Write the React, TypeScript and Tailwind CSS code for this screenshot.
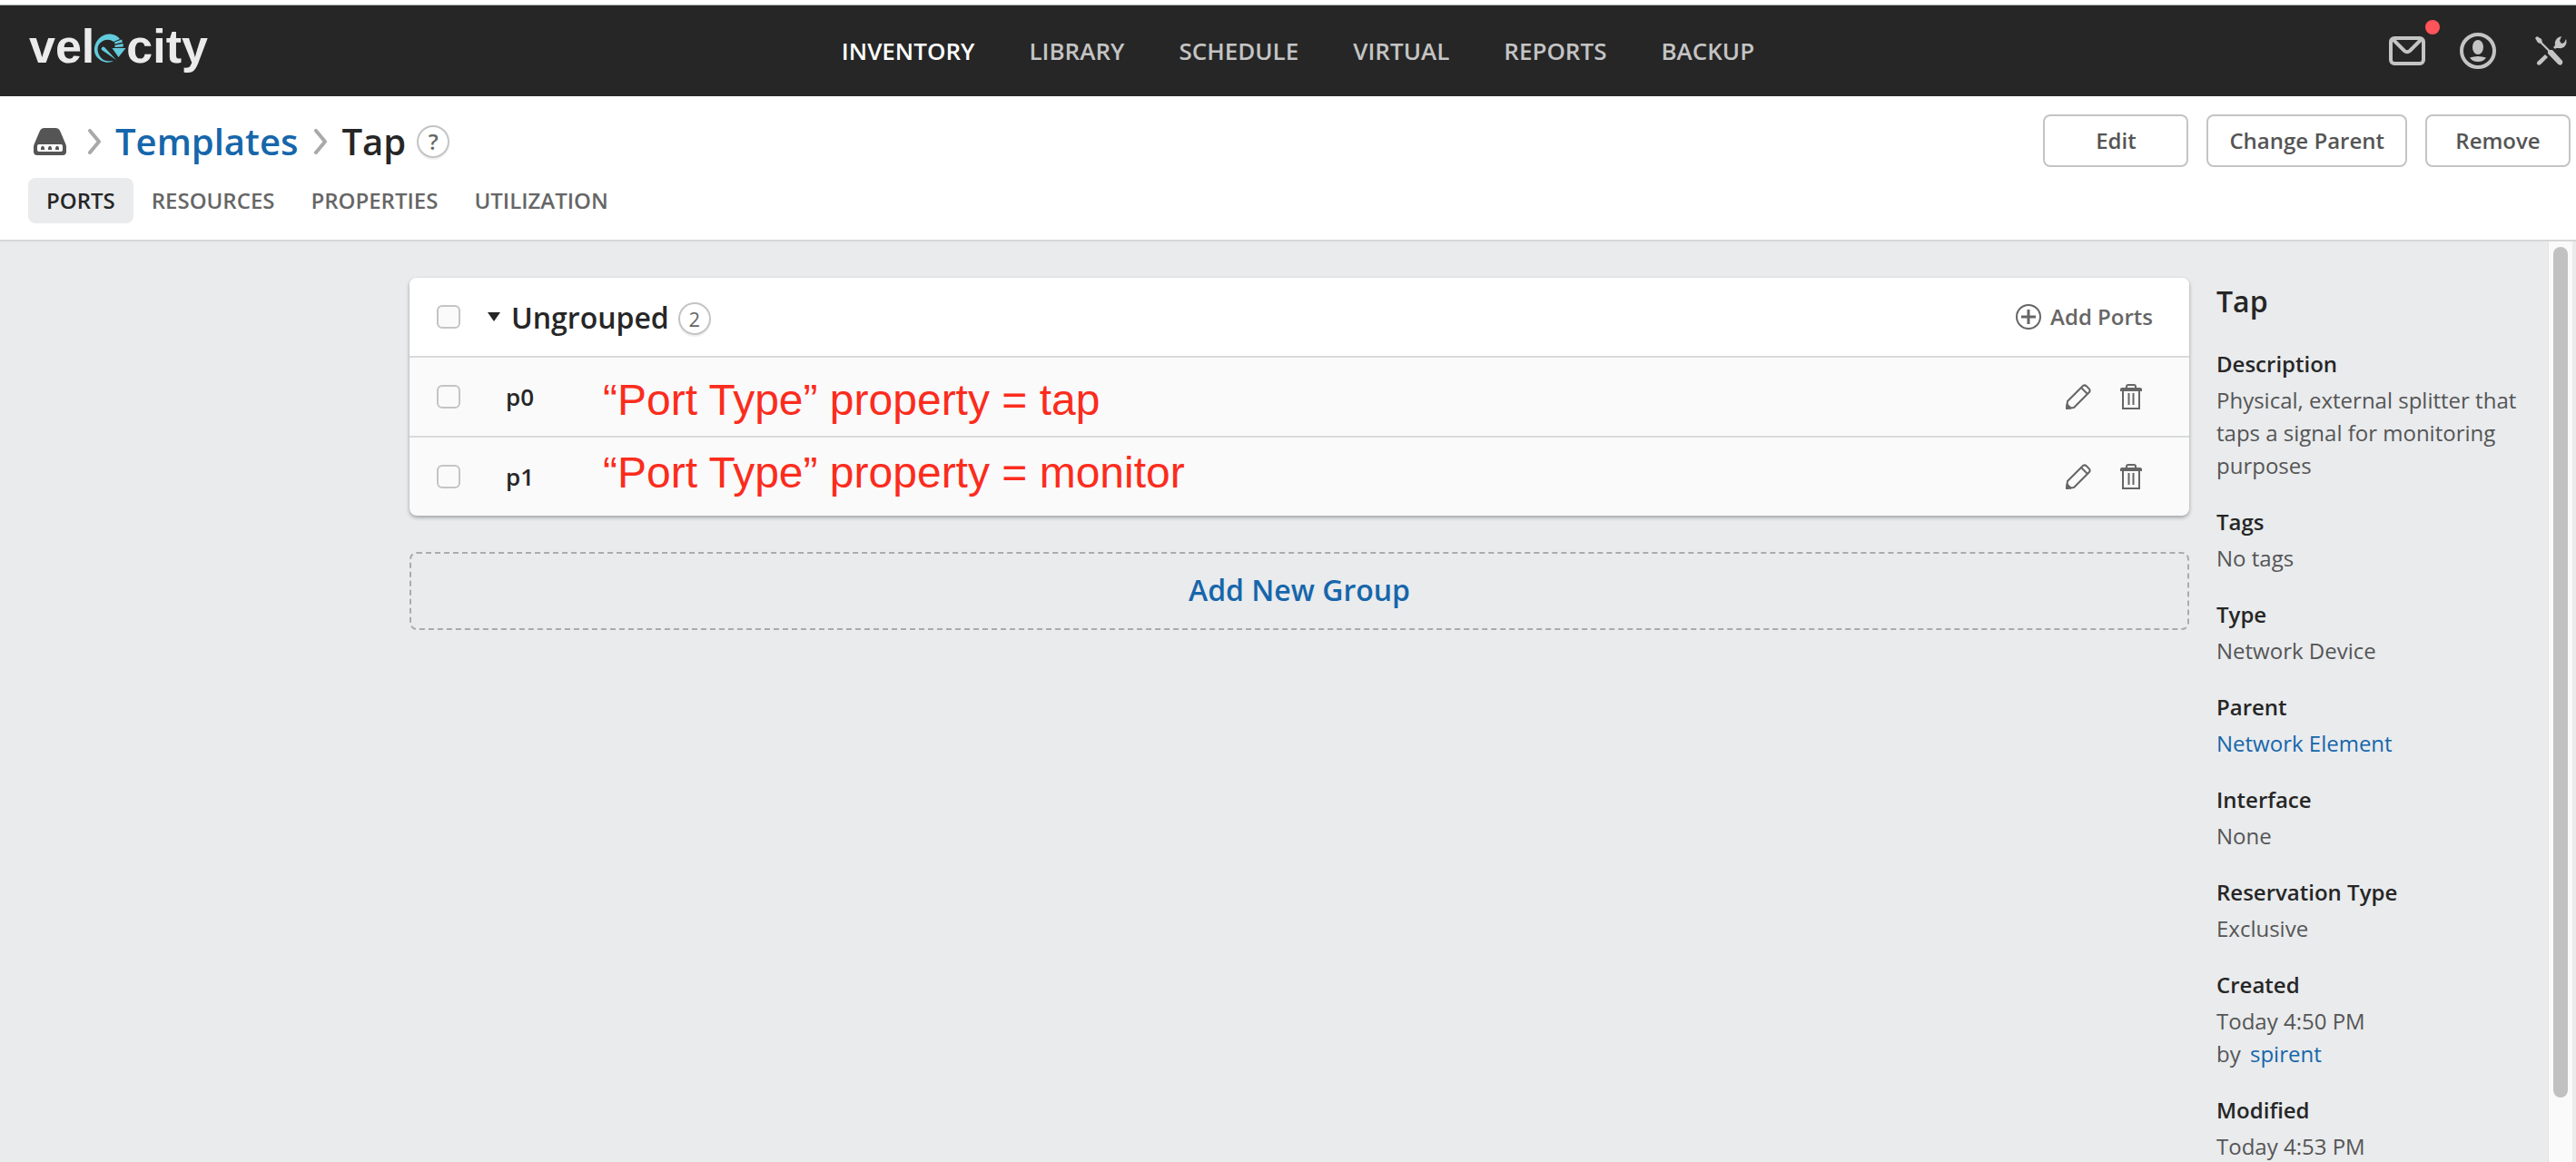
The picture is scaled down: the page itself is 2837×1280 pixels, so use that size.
import React from "react";

const navItems = ["LIBRARY", "SCHEDULE", "VIRTUAL", "REPORTS", "BACKUP"];
const tabs = ["RESOURCES", "PROPERTIES", "UTILIZATION"];
const ports = [
  { name: "p0", note: "“Port Type” property = tap", noteStyle: "pt-2" },
  { name: "p1", note: "“Port Type” property = monitor", noteStyle: "pb-2" },
];

function Logo() {
  return (
    <a href="#home" aria-label="velocity" className="flex items-baseline pb-[10px] font-['Liberation_Sans',sans-serif] text-[52px] leading-[60px] font-bold text-[#ebebeb]">
      <span>vel</span>
      <svg viewBox="0 0 35 32" className="-mb-[2px] h-8 w-[35px]" fill="#62cbdc" aria-hidden="true">
        <path d="M28 6C24 0 13-2 6 4.500C-2 12-2 23 5 28C10 32.500 17 32.500 21 30C15 31 9 30 6 25C2 19 3 12 8 9C12 6 17 6 21 9Z" />
        <path d="M22 9.500L30 6.500l1 3-8.500 2zM22.500 12.700l9-1.700.3 3.500-9.300.5zM19.500 16h15l-8 10z" />
        <path d="M8 18a2 2 0 0 1 3.500-2.500L24 29z" />
      </svg>
      <span>city</span>
    </a>
  );
}

function Chevron() {
  return (
    <svg viewBox="0 0 16 28" className="h-7 w-4" fill="none" stroke="#a9a9a9" strokeWidth="4" aria-hidden="true">
      <path d="M2 2l10 12L2 26" strokeLinecap="round" strokeLinejoin="round" />
    </svg>
  );
}

function Pencil() {
  return (
    <svg viewBox="0 0 28 28" className="size-7" fill="none" stroke="#666" strokeWidth="2" strokeLinejoin="round" aria-hidden="true">
      <path d="M1 27l1-8L19 2q2-1.500 4 .5l2.500 2.500q2 2 .5 4L9 26z" />
      <path d="M17 4l7 7" />
      <path d="M1 27l.5-4.500 4 4z" fill="#666" />
    </svg>
  );
}

function Trash() {
  return (
    <svg viewBox="0 0 24 28" className="h-7 w-6" fill="none" stroke="#666" strokeWidth="2" aria-hidden="true">
      <path d="M3 6v21h18V6M9.500 10v13M14.500 10v13M7 4V3q0-2 2-2h6q2 0 2 2v1" />
      <path d="M0 8V6q0-2 2-2h20q2 0 2 2v2z" fill="#666" stroke="none" />
    </svg>
  );
}

function Check({ label }: { label: string }) {
  return (
    <input
      type="checkbox"
      aria-label={label}
      className="size-[26px] shrink-0 appearance-none rounded-md border-2 border-[#c4c4c4] bg-[#fafafa]"
    />
  );
}

function Item({ label, children }: { label: string; children: React.ReactNode }) {
  return (
    <div className="mb-[26px]">
      <dt className="mb-1 font-semibold text-[#262626]">{label}</dt>
      <dd>{children}</dd>
    </div>
  );
}

export default function App() {
  return (
    <div className="flex h-screen flex-col overflow-hidden bg-white font-['Open_Sans',sans-serif] text-2xl text-[#555]">
      <div className="h-[6px] shrink-0 border-b border-[#a9b5ab] bg-white" />
      <header className="grid h-[100px] shrink-0 grid-cols-[1fr_auto_1fr] items-center bg-[#262626] pr-[10px] pl-8">
        <Logo />
        <nav className="flex gap-[60px] text-[26px] font-semibold text-[#c4c4c4]">
          <a href="#inventory" className="text-white">INVENTORY</a>
          {navItems.map((n) => (
            <a key={n} href={"#" + n.toLowerCase()}>{n}</a>
          ))}
        </nav>
        <div className="flex items-center justify-end gap-[38px]">
          <button aria-label="Messages" className="relative">
            <svg viewBox="0 0 40 32" className="h-8 w-10" fill="none" stroke="#c4c4c4" strokeWidth="4" aria-hidden="true">
              <rect x="2" y="2" width="36" height="28" rx="4" />
              <path d="M4 3l13 13q3 2.500 6 0L36 3" />
            </svg>
            <span className="absolute -top-[18px] -right-4 size-4 rounded-full bg-[#ff5459]" />
          </button>
          <button aria-label="Account">
            <svg viewBox="0 0 40 40" className="size-10" aria-hidden="true">
              <circle cx="20" cy="20" r="18" fill="none" stroke="#c4c4c4" strokeWidth="4" />
              <ellipse cx="20" cy="16" rx="6" ry="8" fill="#c4c4c4" />
              <path d="M11 27.500q9-3 18 0-3 4.500-9 4.500t-9-4.500z" fill="#c4c4c4" />
            </svg>
          </button>
          <button aria-label="Settings" className="ml-1">
            <svg viewBox="0 0 36 32" className="h-8 w-9" aria-hidden="true">
              <path d="M1 2l2-2 5 3 1 4 8 8 3 0 11 12q1 3-1.500 4.500-2 .5-3.500-1L15 19v-3L7 8 4 7z" fill="#c4c4c4" />
              <path d="M12 20l3 3-8 8q-2 1.500-3.500 0T4 27.500z" fill="#c4c4c4" />
              <path d="M21 12l2-2c-1-5 2-9 7-10l-2 5 2 3 3-1 2-4c2 6-2 11-8 10h-3l-1 1z" fill="#c4c4c4" />
            </svg>
          </button>
        </div>
      </header>

      <section className="flex h-40 shrink-0 justify-between border-b-2 border-[#d6d7d8] pt-5 pr-[6px] pl-[31px]">
        <div>
          <div className="flex h-[60px] items-center text-[40px] font-semibold">
            <a href="#inventory" aria-label="Devices" className="ml-[6px]">
              <svg viewBox="0 0 36 30" className="h-[30px] w-9" aria-hidden="true">
                <path d="M12 0h12q4 0 5.500 4L35 17q1 2 1 4v5q0 4-4 4H4q-4 0-4-4v-5q0-2 1-4L6.500 4Q8 0 12 0z" fill="#555" />
                <rect x="4" y="18" width="28" height="8" rx="2" fill="#fff" />
                <path d="M8 24v-2l1-2h2l1 2v2zM16 24v-2l1-2h2l1 2v2zM24 24v-2l1-2h2l1 2v2z" fill="#555" />
              </svg>
            </a>
            <span className="ml-6 flex"><Chevron /></span>
            <a href="#templates" className="ml-[14px] text-[#1666ab]">Templates</a>
            <span className="ml-[18px] flex"><Chevron /></span>
            <h1 className="ml-[14px] text-[#262626]">Tap</h1>
            <button aria-label="Help" className="ml-3 size-9 rounded-full border-2 border-[#c4c4c4] text-2xl leading-8 font-semibold text-[#666] shadow-[0_2px_1px_#0001]">?</button>
          </div>
          <nav className="mt-[10px] flex gap-10 font-semibold text-[#666]">
            <a href="#ports" className="-mr-5 rounded-lg bg-[#e9ebed] px-5 py-[9px] text-[#262626]">PORTS</a>
            {tabs.map((t) => (
              <a key={t} href={"#" + t.toLowerCase()} className="py-[9px]">{t}</a>
            ))}
          </nav>
        </div>
        <div className="flex items-start gap-5 font-semibold">
          {["Edit", "Change Parent", "Remove"].map((b) => (
            <button key={b} className="h-[58px] min-w-40 rounded-lg border-2 border-[#c4c4c4] px-[23px]">{b}</button>
          ))}
        </div>
      </section>

      <div className="flex min-h-0 flex-1 bg-[#e9ebed] pr-1">
        <main className="min-w-0 flex-1 pt-10 pr-[30px] pl-[451px]">
          <section className="rounded-lg bg-[#fafafa] shadow-[0_2px_4px_#0005]">
            <div className="flex h-[88px] items-center rounded-t-lg border-b-2 border-[#d9dadb] bg-white pr-10 pl-[30px]">
              <Check label="Select all" />
              <button aria-label="Collapse" className="ml-[30px]">
                <svg viewBox="0 0 14 10" className="h-[10px] w-[14px]" aria-hidden="true">
                  <path d="M0 0h14L7 10z" fill="#262626" />
                </svg>
              </button>
              <h2 className="ml-3 pt-[2px] text-[32px] font-semibold text-[#262626]">Ungrouped</h2>
              <span className="mt-1 ml-[10px] size-9 rounded-full border-2 border-[#c4c4c4] text-center text-[22px] leading-8 text-[#666] shadow-[0_2px_1px_#0001]">2</span>
              <button className="ml-auto flex items-center gap-[10px] font-semibold text-[#666]">
                <svg viewBox="0 0 28 28" className="size-7" fill="none" stroke="#666" strokeWidth="2" aria-hidden="true">
                  <circle cx="14" cy="14" r="13" />
                  <path d="M14 6v16M6 14h16" strokeWidth="3" />
                </svg>
                Add Ports
              </button>
            </div>
            <ul>
              {ports.map((p) => (
                <li key={p.name} className="flex h-[88px] items-center border-b-2 border-[#d9dadb] pr-[52px] pl-[30px] last:h-[86px] last:border-b-0">
                  <Check label={"Select " + p.name} />
                  <span className="ml-[50px] w-[107px] text-[26px] font-semibold text-[#262626]">{p.name}</span>
                  <span className={"font-['Liberation_Sans',sans-serif] text-5xl text-[#fb2c1d] " + p.noteStyle}>{p.note}</span>
                  <button aria-label={"Edit " + p.name} className="ml-auto"><Pencil /></button>
                  <button aria-label={"Delete " + p.name} className="ml-8"><Trash /></button>
                </li>
              ))}
            </ul>
          </section>
          <button className="mt-10 h-[86px] w-full rounded-lg border-2 border-dashed border-[#a9abad] pb-[2px] text-[32px] font-semibold text-[#1666ab]">
            Add New Group
          </button>
        </main>
        <aside className="w-[365px] shrink-0 overflow-hidden pt-[42px] pr-5 leading-9">
          <h2 className="mb-[27px] text-[32px] leading-[48px] font-semibold text-[#262626]">Tap</h2>
          <dl>
            <Item label="Description">Physical, external splitter that taps a signal for monitoring purposes</Item>
            <Item label="Tags">No tags</Item>
            <Item label="Type">Network Device</Item>
            <Item label="Parent"><a href="#parent" className="text-[#1666ab]">Network Element</a></Item>
            <Item label="Interface">None</Item>
            <Item label="Reservation Type">Exclusive</Item>
            <Item label="Created">
              Today 4:50 PM<br />by <a href="#spirent" className="ml-1 text-[#1666ab]">spirent</a>
            </Item>
            <Item label="Modified">Today 4:53 PM</Item>
          </dl>
        </aside>
        <div className="w-[27px] shrink-0 border-l border-[#e3e4e5] bg-[#fafafa] px-[5px] pt-[6px]">
          <div className="h-[93%] rounded-full bg-[#c1c1c1]" />
        </div>
      </div>
    </div>
  );
}
